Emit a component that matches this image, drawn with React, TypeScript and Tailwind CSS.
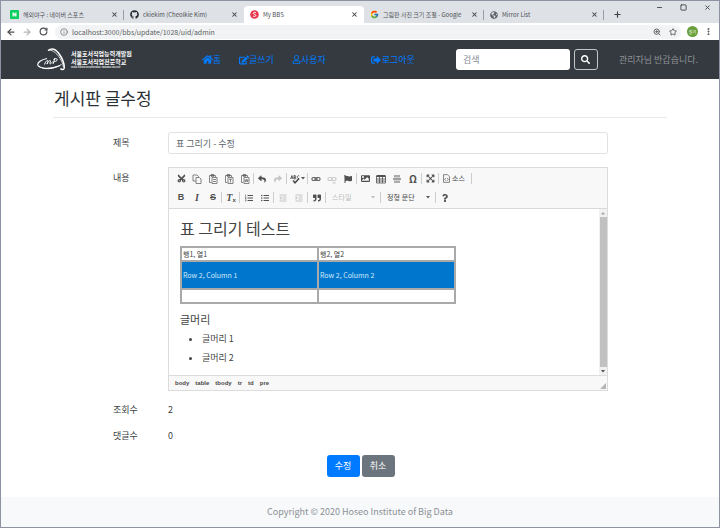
import React from "react";
import {
  FaHome, FaEdit, FaRegUser, FaSignOutAlt, FaSearch, FaGithub, FaGlobeAmericas,
  FaCut, FaRegCopy, FaReply, FaShare, FaFlag, FaImage, FaExpandArrowsAlt,
  FaListOl, FaListUl, FaOutdent, FaIndent, FaQuoteRight, FaQuestion,
} from "react-icons/fa";
import { FcGoogle } from "react-icons/fc";
import { ArrowLeft, ArrowRight, RotateCw, Info, ZoomIn, Star, X, Plus, Minus, Square, MoreVertical } from "lucide-react";

type Kids = { children: React.ReactNode };

/* ---------- browser frame ---------- */

function NaverMark() {
  return (
    <svg viewBox="0 0 9 9" className="size-[9px] shrink-0">
      <rect width="9" height="9" rx="1" fill="#07cf5f" />
      <path d="M2.5 6.5v-4h1.4l1.3 2v-2h1.3v4H5.1l-1.3-2v2z" fill="#fff" />
    </svg>
  );
}

function BbsMark() {
  return (
    <svg viewBox="0 0 9 9" className="size-[9px] shrink-0">
      <circle cx="4.5" cy="4.5" r="4.3" fill="#e8384f" />
      <path d="M5.9 2.8C5 2 3.2 2.3 3.3 3.4c.1 1 2.5.8 2.5 2 0 1.2-1.9 1.3-2.8.5" fill="none" stroke="#fff" strokeWidth="1" />
    </svg>
  );
}

function Tab({ icon, title, active, divider }: { icon: React.ReactNode; title: string; active?: boolean; divider?: boolean }) {
  return (
    <div
      className={
        "flex h-[17px] w-[120px] min-w-0 items-center gap-1 pl-[6px] pr-[4px] " +
        (active ? "rounded-t-[4px] bg-white" : divider ? "bg-[linear-gradient(#9a9ea4,#9a9ea4)] bg-[length:1px_10px] bg-right bg-no-repeat" : "")
      }
    >
      {icon}
      <span className="min-w-0 flex-1 overflow-hidden whitespace-nowrap text-[6px] leading-[10px] text-[#4e5156]">{title}</span>
      <button aria-label="탭 닫기" className="shrink-0 pr-[2px] text-[#3c4043]">
        <X className="size-[7px]" strokeWidth={3.5} />
      </button>
    </div>
  );
}

function BrowserChrome() {
  return (
    <header>
      <div className="flex h-[22px] items-end bg-[#dee1e6] pl-[3px] pt-px">
        <Tab icon={<NaverMark />} title="해외야구 : 네이버 스포츠" divider />
        <Tab icon={<FaGithub className="size-[9px] shrink-0 text-[#24292e]" />} title="ckiekim (Cheolkie Kim)" />
        <Tab icon={<BbsMark />} title="My BBS" active />
        <Tab icon={<FcGoogle className="size-[9px] shrink-0" />} title="그림판 사진 크기 조절 - Google" divider />
        <Tab icon={<FaGlobeAmericas className="size-[8px] shrink-0 text-[#5f6368]" />} title="Mirror List" divider />
        <button aria-label="새 탭" className="ml-1 flex h-[17px] w-[18px] items-center justify-center text-[#3c4043]">
          <Plus className="size-[9px]" strokeWidth={3} />
        </button>
        <div className="ml-auto flex h-[21px] items-start gap-[17px] pr-[8px] pt-[2px] text-[#3c4043]">
          <button aria-label="최소화"><Minus className="size-[7px]" strokeWidth={3} /></button>
          <button aria-label="최대화"><Square className="size-[7px]" strokeWidth={3} /></button>
          <button aria-label="닫기"><X className="size-[7px]" strokeWidth={3} /></button>
        </div>
      </div>
      <div className="flex h-[17px] items-center bg-white pl-[5px] pr-[6px] text-[#4a4d51]">
        <button aria-label="뒤로"><ArrowLeft className="size-[10px]" strokeWidth={3} /></button>
        <button aria-label="앞으로" className="ml-[6px] text-[#b4b6b9]"><ArrowRight className="size-[10px]" strokeWidth={3} /></button>
        <button aria-label="새로고침" className="ml-[7px]"><RotateCw className="size-[9px]" strokeWidth={3} /></button>
        <div className="ml-[7px] flex h-[14px] min-w-0 flex-1 items-center rounded-full bg-[#f1f3f4] pl-[5px] pr-[4px]">
          <Info className="size-[8px] shrink-0 text-[#5f6368]" />
          <input
            aria-label="주소"
            defaultValue="localhost:3000/bbs/update/1028/uid/admin"
            className="ml-[4px] h-[12px] min-w-0 flex-1 bg-transparent text-[7px] leading-[12px] text-[#5b5e62] outline-none"
          />
          <ZoomIn className="size-[8px] text-[#5f6368]" strokeWidth={3} />
          <button aria-label="북마크" className="ml-[8px] text-[#5f6368]"><Star className="size-[8px]" strokeWidth={3} /></button>
        </div>
        <div className="ml-[6px] flex size-[11px] items-center justify-center rounded-full bg-[#689f38] text-[4px] leading-[6px] text-white">철기</div>
        <button aria-label="메뉴" className="ml-[6px]"><MoreVertical className="size-[9px]" strokeWidth={3} /></button>
      </div>
    </header>
  );
}

/* ---------- site navigation ---------- */

function Logo() {
  return (
    <a href="#" className="flex items-center gap-[5px] text-white">
      <svg viewBox="0 0 29 23" className="h-[23px] w-[29px]" fill="none" stroke="#fff">
        <path d="M11 2.5C14 .3 18 .5 21.500 5c4 5 6.500 12 5.500 15.500-.6 1.800-2.500 1-3.600.1" strokeWidth="1.5" />
        <path d="M11.500 2.300C16 1.500 21 6 24.500 13c1 2.200 1.700 4.300 1.900 6" strokeWidth=".8" />
        <path d="M10 10.500C4 11.700.3 14.500.8 17c.7 3.700 12 4.800 21.700.8" strokeWidth="1.2" />
        <path d="M2 18c4 4 15 3.500 22.500-1.500" strokeWidth="1" />
        <path d="M7.500 16.500c1-2.700 2-4 3-4s-.2 2.500-.5 3.600c1-2.500 2.300-3.800 3.200-3.600s-.6 2.600-.3 3.200c.4.700 1.700-.4 2.500-2M18 10l-2 6M16.500 11.500c2-1.300 4-1 3.700.4-.2 1-1.500 1.600-3 1.700" strokeWidth="1" />
      </svg>
      <span className="flex flex-col whitespace-nowrap text-[6px] font-bold leading-[8px]">
        <span>서울호서직업능력개발원</span>
        <span>서울호서직업전문학교</span>
        <span className="text-[2px] leading-[4px]">SEOUL HOSEO OCCUPATIONAL TRAINING COLLEGE</span>
      </span>
    </a>
  );
}

function NavLink({ icon, children }: Kids & { icon: React.ReactNode }) {
  return (
    <a href="#" className="flex items-center whitespace-nowrap text-[9px] leading-[14px] text-[#007bff]">
      {icon}
      {children}
    </a>
  );
}

function SiteNav() {
  return (
    <nav className="flex h-[39px] items-center bg-[#343a40] pl-[36px] pr-[21px]">
      <Logo />
      <div className="ml-[70px] flex items-center gap-[18px]">
        <NavLink icon={<FaHome className="size-[11px]" />}>홈</NavLink>
        <NavLink icon={<FaEdit className="size-[10px]" />}>글쓰기</NavLink>
        <NavLink icon={<FaRegUser className="size-[9px]" />}>사용자</NavLink>
      </div>
      <div className="ml-[45px]">
        <NavLink icon={<FaSignOutAlt className="mr-px size-[10px]" />}>로그아웃</NavLink>
      </div>
      <form className="ml-auto flex gap-1" onSubmit={(e) => e.preventDefault()}>
        <input
          type="search"
          aria-label="검색"
          placeholder="검색"
          className="h-[21px] w-[114px] rounded-[3px] bg-white px-[7px] text-[9px] leading-[14px] text-[#495057] outline-none placeholder:text-[#868e96]"
        />
        <button aria-label="검색 실행" className="flex h-[21px] w-6 items-center justify-center rounded-[3px] border border-[#c4c7ca] text-white">
          <FaSearch className="size-[9px]" />
        </button>
      </form>
      <span className="ml-[21px] whitespace-nowrap text-[9px] leading-[14px] text-[#8d9195]">관리자님 반갑습니다.</span>
    </nav>
  );
}

/* ---------- editor toolbar ---------- */

function Clipboard({ children }: Kids) {
  return (
    <svg viewBox="0 0 10 10" className="size-[10px]" fill="none" stroke="#777" strokeWidth=".9">
      <path d="M3.5 8.5H1.5v-7h6v1.5" />
      <path d="M3 .6h3v1.6H3z" fill="#555" />
      <path d="M4 3.5h5v6H4z" fill="#f8f8f8" />
      {children}
    </svg>
  );
}

function Chain({ broken }: { broken?: boolean }) {
  return (
    <svg viewBox="0 0 10 10" className="size-[10px]" fill="none" stroke="#666" strokeWidth="1.2">
      <rect x="1" y="3.5" width="4" height="3" rx="1.2" />
      <rect x="5" y="3.5" width="4" height="3" rx="1.2" />
      {broken ? <path d="M5.5 8l3 1.5M8.5 8l-3 1.5" strokeWidth=".8" /> : <path d="M3 5h4" />}
    </svg>
  );
}

function Caret() {
  return (
    <svg viewBox="0 0 4 3" className="h-[3px] w-1 shrink-0"><path d="M0 0h4L2 2.5z" fill="#555" /></svg>
  );
}

function Tool({ label, off, children }: Kids & { label: string; off?: boolean }) {
  return (
    <button
      type="button"
      aria-label={label}
      className={"flex h-[11px] w-4 items-center justify-center text-[#505050] " + (off ? "opacity-30" : "")}
    >
      {children}
    </button>
  );
}

function Group({ children, last }: Kids & { last?: boolean }) {
  return (
    <div className={"flex h-[11px] items-center " + (last ? "" : "border-r border-[#cdcdcd]")}>{children}</div>
  );
}

function Combo({ label, off }: { label: string; off?: boolean }) {
  return (
    <span className={"flex w-[53px] items-center pl-[5px] pr-[5px] " + (off ? "opacity-35" : "")}>
      <select
        aria-label={label}
        disabled={off}
        className="h-[11px] min-w-0 flex-1 appearance-none bg-transparent text-[7px] leading-[11px] text-[#484848] opacity-100 outline-none"
      >
        <option>{label}</option>
      </select>
      <Caret />
    </span>
  );
}

function Toolbar() {
  return (
    <div className="flex h-[41px] flex-col gap-2 border-b border-[#d9d9d9] bg-[#f8f8f8] pl-1 pt-[5px]">
      <div className="flex">
        <Group>
          <Tool label="잘라내기"><FaCut className="size-[9px] -rotate-90" /></Tool>
          <Tool label="복사">
            <svg viewBox="0 0 10 10" className="size-[10px]" fill="#f8f8f8" stroke="#777" strokeWidth=".9">
              <path d="M1 1h4l1.500 1.500V7H1z" />
              <path d="M4 3.500h3.500L9 5v4.500H4z" />
            </svg>
          </Tool>
          <Tool label="붙여넣기"><Clipboard><path d="M5 5.500h3M5 7.500h3" /></Clipboard></Tool>
          <Tool label="텍스트로 붙여넣기"><Clipboard><path d="M5 5.200h3M6.500 5v3.500" /></Clipboard></Tool>
          <Tool label="워드에서 붙여넣기"><Clipboard><path d="M5 5l.7 3 .8-2.500.8 2.500L8 5" /></Clipboard></Tool>
        </Group>
        <Group>
          <Tool label="실행 취소"><FaReply className="size-[8px]" /></Tool>
          <Tool label="다시 실행" off><FaShare className="size-[8px]" /></Tool>
        </Group>
        <Group>
          <button type="button" aria-label="맞춤법 검사" className="flex h-[11px] w-5 items-center justify-center gap-px">
            <svg viewBox="0 0 10 10" className="size-[10px]" fill="none" stroke="#484848">
              <path d="M.6 5L1.900 1.500 3.200 5M1 4h1.800M4 1.500V5h1c1.200 0 1.200-1.600 0-1.700H4h1c1-.1 1-1.700 0-1.800zM9.300 2c-2-1.500-3 2.800 0 2.700" strokeWidth=".8" />
              <path d="M3 6.500l2 2.300L9 4.500" strokeWidth="1.5" />
            </svg>
            <Caret />
          </button>
        </Group>
        <Group>
          <Tool label="링크"><Chain /></Tool>
          <Tool label="링크 해제" off><Chain broken /></Tool>
          <Tool label="책갈피"><FaFlag className="size-[8px]" /></Tool>
        </Group>
        <Group>
          <Tool label="이미지"><FaImage className="size-[9px]" /></Tool>
          <Tool label="표">
            <svg viewBox="0 0 10 10" className="size-[10px]" fill="none" stroke="#505050">
              <path d="M.5 2h9" strokeWidth="2" />
              <path d="M.5 2v7h9V2M.5 5h9M.5 7h9M3.500 2v7M6.500 2v7" strokeWidth=".8" />
            </svg>
          </Tool>
          <Tool label="가로 줄">
            <svg viewBox="0 0 10 10" className="size-[10px]">
              <path d="M2 1h6v2.500H2zM2 6.500h6V9H2z" fill="#aaa" />
              <path d="M1 4.500h8v1H1z" fill="#484848" />
            </svg>
          </Tool>
          <Tool label="특수문자"><span className="text-[10px] font-bold leading-[11px]">Ω</span></Tool>
        </Group>
        <Group><Tool label="최대화"><FaExpandArrowsAlt className="size-[9px]" /></Tool></Group>
        <Group>
          <button type="button" className="flex h-[11px] w-8 items-center gap-[2px] pl-1 text-[7px] leading-[11px] text-[#484848]">
            <svg viewBox="0 0 8 10" className="h-[9px] w-[7px] shrink-0" fill="none" stroke="#666" strokeWidth=".9">
              <path d="M.6.6h4.500l2.300 2.300v6.500H.6zM3.200 4.500L2 6l1.200 1.500M4.800 4.500L6 6 4.800 7.500" />
            </svg>
            <span className="whitespace-nowrap">소스</span>
          </button>
        </Group>
      </div>
      <div className="flex gap-px font-['Liberation_Sans','Noto_Sans_CJK_KR',sans-serif] text-[9px] leading-[11px]">
        <Group>
          <Tool label="굵게"><b>B</b></Tool>
          <Tool label="기울임꼴"><b className="font-['Liberation_Serif',serif] text-[10px] italic">I</b></Tool>
          <Tool label="취소선"><b className="line-through">S</b></Tool>
        </Group>
        <Group>
          <Tool label="형식 지우기">
            <b className="font-['Liberation_Serif',serif] text-[10px] italic">T</b>
            <span className="self-end text-[6px] font-bold leading-[6px]">x</span>
          </Tool>
        </Group>
        <Group>
          <Tool label="번호 목록"><FaListOl className="size-[8px]" /></Tool>
          <Tool label="글머리 목록"><FaListUl className="size-[8px]" /></Tool>
        </Group>
        <Group>
          <Tool label="내어쓰기" off><FaOutdent className="size-[8px]" /></Tool>
          <Tool label="들여쓰기" off><FaIndent className="size-[8px]" /></Tool>
        </Group>
        <Group><Tool label="인용 단락"><FaQuoteRight className="size-[8px]" /></Tool></Group>
        <Group><Combo label="스타일" off /></Group>
        <Group><Combo label="정형 문단" /></Group>
        <Group last><Tool label="도움말"><FaQuestion className="size-[8px]" /></Tool></Group>
      </div>
    </div>
  );
}

/* ---------- editor ---------- */

const cell = "border-2 border-[#a9a9a9] px-px";

function Document() {
  return (
    <div
      contentEditable
      suppressContentEditableWarning
      role="textbox"
      aria-multiline="true"
      aria-labelledby="content-label"
      className="min-w-0 flex-1 pl-[11px] pt-[8px] text-[9px] text-[#444] outline-none"
    >
      <h2 className="text-[16px] leading-[22px]">표 그리기 테스트</h2>
      <table className="mt-[7px] w-[276px] table-fixed border-collapse border-2 border-[#a0a0a0] text-left text-[7px] leading-[10px]">
        <tbody>
          <tr className="h-[14px]">
            <td className={cell}>행1, 열1</td>
            <td className={cell}>행2, 열2</td>
          </tr>
          <tr className="h-[28px] bg-[#0076cc] text-[#d4ebfc]">
            <td className={cell}>Row 2, Column 1</td>
            <td className={cell}>Row 2, Column 2</td>
          </tr>
          <tr className="h-[14px]">
            <td className={cell} />
            <td className={cell} />
          </tr>
        </tbody>
      </table>
      <h3 className="mt-[7px] text-[11px] leading-[16px]">글머리</h3>
      <ul className="mt-[5px] flex list-disc flex-col gap-[5px] pl-[22px] leading-[14px]">
        <li>글머리 1</li>
        <li>글머리 2</li>
      </ul>
    </div>
  );
}

function Scrollbar() {
  return (
    <div className="flex w-[8px] flex-col items-center bg-[#f1f1f1]">
      <svg viewBox="0 0 8 8" className="size-[8px]"><path d="M2 5.500h4L4 3z" fill="#a3a3a3" /></svg>
      <div className="w-[7px] flex-1 bg-[#c1c1c1]" />
      <svg viewBox="0 0 8 8" className="size-[8px]"><path d="M2 3h4L4 5.500z" fill="#505050" /></svg>
    </div>
  );
}

function Editor() {
  return (
    <div className="border border-[#dcdcdc] bg-white">
      <Toolbar />
      <div className="flex h-[166px]">
        <Document />
        <Scrollbar />
      </div>
      <div className="flex h-[15px] items-center gap-[6px] border-t border-[#dcdcdc] bg-[#f8f8f8] pl-[6px] font-['Liberation_Sans',sans-serif] text-[6px] font-bold leading-[10px] text-[#484848]">
        {["body", "table", "tbody", "tr", "td", "pre"].map((t) => (
          <a href="#" key={t}>{t}</a>
        ))}
        <svg viewBox="0 0 6 6" className="mb-px ml-auto mr-px size-[6px] self-end"><path d="M6 0v6H0z" fill="#b5b5b5" /></svg>
      </div>
    </div>
  );
}

/* ---------- page ---------- */

export default function App() {
  return (
    <div className="flex min-h-screen flex-col border border-[#8d93a3] bg-white font-['Noto_Sans_CJK_KR',sans-serif]">
      <BrowserChrome />
      <SiteNav />
      <main className="px-[52px] pt-[8px] text-[9px] leading-[14px] text-[#3a3f44]">
        <h1 className="border-b border-[#e9e9e9] pb-[8px] pl-px text-[17px] leading-[22px] text-[#2b3035]">게시판 글수정</h1>
        <form className="pl-[60px] pr-[59px] pt-[14px]" onSubmit={(e) => e.preventDefault()}>
          <div className="flex items-center">
            <label htmlFor="title" className="w-[55px]">제목</label>
            <input
              id="title"
              defaultValue="표 그리기 - 수정"
              className="h-[22px] min-w-0 flex-1 rounded-[3px] border border-[#dfe2e5] bg-white px-[7px] text-[9px] text-[#5c6369] outline-none"
            />
          </div>
          <div className="mt-[13px] flex">
            <label id="content-label" className="w-[55px] pt-[4px]">내용</label>
            <div className="min-w-0 flex-1"><Editor /></div>
          </div>
          <div className="mt-[12px] flex">
            <label htmlFor="views" className="w-[55px]">조회수</label>
            <output id="views">2</output>
          </div>
          <div className="mt-[12px] flex">
            <label htmlFor="replies" className="w-[55px]">댓글수</label>
            <output id="replies">0</output>
          </div>
          <div className="mt-[12px] flex justify-center gap-[2px] pb-[20px]">
            <button type="submit" className="h-[22px] w-[33px] rounded-[3px] bg-[#007bff] text-white">수정</button>
            <button type="button" className="h-[22px] w-[33px] rounded-[3px] bg-[#6c757d] text-white">취소</button>
          </div>
        </form>
      </main>
      <footer className="mt-auto flex h-[30px] items-center justify-center bg-[#f8f9fa] text-[9px] leading-[14px] text-[#8b9197]">
        Copyright © 2020 Hoseo Institute of Big Data
      </footer>
    </div>
  );
}
